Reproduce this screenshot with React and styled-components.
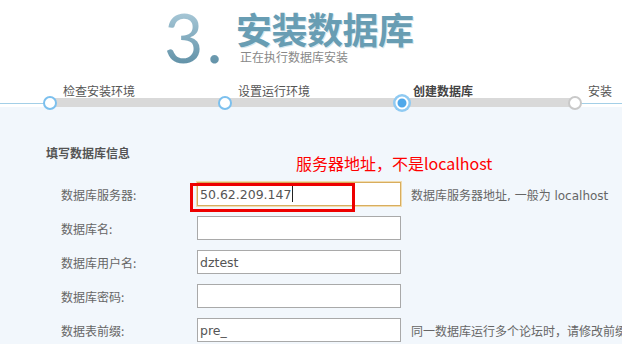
import React from 'react'
import styled, {createGlobalStyle} from 'styled-components'

const GlobalStyle = createGlobalStyle`
  html, body {
    margin: 0;
    padding: 0;
    background: #fff;
    overflow: hidden;
  }
  body {
    font-family: "DejaVu Sans", "Noto Sans CJK SC", sans-serif;
    font-size: 12px;
    color: #555;
  }
`

const steps = [
  {label: '检查安装环境', width: 175},
  {label: '设置运行环境', width: 177},
  {label: '创建数据库', width: 173, active: true},
  {label: '安装', last: true},
]

const rows = [
  {label: '数据库服务器:', value: '50.62.209.147', focus: true, help: '数据库服务器地址, 一般为 localhost'},
  {label: '数据库名:', value: ''},
  {label: '数据库用户名:', value: 'dztest'},
  {label: '数据库密码:', value: ''},
  {label: '数据表前缀:', value: 'pre_', help: '同一数据库运行多个论坛时，请修改前缀'},
]

export default function App(){
  return(
    <Page>
      <GlobalStyle/>
      <Header>
        <Number>3<Dot>.</Dot></Number>
        <TitleBlock>
          <Title>安装数据库</Title>
          <Subtitle>正在执行数据库安装</Subtitle>
        </TitleBlock>
      </Header>

      <Steps>
        {steps.map(s=>(
          <Segment key={s.label} $width={s.width}>
            <StepLabel $active={s.active}>{s.label}</StepLabel>
            <Bar $last={s.last}>
              <Dot2 $active={s.active} $last={s.last}/>
            </Bar>
          </Segment>
        ))}
      </Steps>

      <Panel>
        <SectionTitle>填写数据库信息</SectionTitle>
        <Form>
          {rows.map((r,i)=>(
            <Row key={r.label}>
              <Label>{r.label}</Label>
              <FieldWrap>
                <Field $focus={r.focus}>
                  {r.value}
                  {r.focus ? <Caret/> : null}
                </Field>
                {i === 0 ? (
                  <>
                    <Note>服务器地址，不是localhost</Note>
                    <Mark/>
                  </>
                ) : null}
              </FieldWrap>
              {r.help ? <Help>{r.help}</Help> : null}
            </Row>
          ))}
        </Form>
      </Panel>
    </Page>
  )
}

const Page = styled.div`
  width: 622px;
  height: 344px;
  display: flex;
  flex-direction: column;
  overflow: hidden;
`

const Header = styled.div`
  display: flex;
  align-items: flex-start;
  height: 80px;
  padding-left: 164px;
`

const Number = styled.div`
  font-family: Lato, "Open Sans", "Liberation Sans", sans-serif;
  font-weight: 400;
  font-size: 68px;
  line-height: 74px;
  background: linear-gradient(180deg, #b8d4e1 0%, #8fb5c7 40%, #55889f 100%);
  -webkit-background-clip: text;
  background-clip: text;
  color: transparent;
  width: 72px;
  height: 74px;
`

const Dot = styled.span`
  margin-left: 3px;
`

const TitleBlock = styled.div`
  display: flex;
  flex-direction: column;
  margin-top: 10px;
`

const Title = styled.div`
  font-family: "Noto Sans CJK SC", sans-serif;
  font-weight: 700;
  font-size: 36px;
  line-height: 36px;
  color: #689db3;
  text-shadow: 1px 1px 0 #d7e6ec;
  letter-spacing: -0.5px;
`

const Subtitle = styled.div`
  font-family: "Noto Sans CJK SC", sans-serif;
  font-size: 12px;
  line-height: 14px;
  color: #888;
  margin-top: 4px;
  padding-left: 4px;
`

const Steps = styled.div`
  display: flex;
  padding-left: 50px;
  margin-top: 3px;
  background: linear-gradient(#a3cfe7, #a3cfe7) 0 calc(100% - 3px) / 100% 1px no-repeat;
`

const Segment = styled.div`
  display: flex;
  flex-direction: column;
  width: ${p => p.$width ? p.$width + 'px' : 'auto'};
  flex: ${p => p.$width ? 'none' : '1'};
`

const StepLabel = styled.div`
  font-family: "Noto Sans CJK SC", sans-serif;
  font-size: 12px;
  line-height: 15px;
  height: 15px;
  padding-left: ${p => p.$active ? '11px' : '13px'};
  color: ${p => p.$active ? '#444' : '#555'};
  font-weight: ${p => p.$active ? 700 : 400};
  white-space: nowrap;
`

const Bar = styled.div`
  position: relative;
  height: 9px;
  background: ${p => p.$last ? 'transparent' : '#d9d9d9'};
`

const Dot2 = styled.span`
  position: absolute;
  left: 0;
  top: 50%;
  transform: translate(-50%, -50%);
  box-sizing: border-box;
  border-radius: 50%;
  width: ${p => p.$active ? '13px' : '14px'};
  height: ${p => p.$active ? '13px' : '14px'};
  background: ${p => p.$active ? '#4fa8ea' : '#fff'};
  border: ${p => p.$active ? '2px solid #fff' : p.$last ? '2px solid #c9c9c9' : '2.5px solid #7cc0ee'};
  box-shadow: ${p => p.$active ? '0 0 0 2.5px #8fcaf2' : 'none'};
`

const Panel = styled.div`
  flex: 1;
  background: #f2f7fc;
  padding: 39px 0 0 46px;
  min-width: 0;
`

const SectionTitle = styled.div`
  font-family: "Noto Sans CJK SC", sans-serif;
  font-weight: 700;
  font-size: 12px;
  line-height: 14px;
  color: #555;
`

const Form = styled.div`
  display: flex;
  flex-direction: column;
  gap: 10px;
  margin-top: 22px;
`

const Row = styled.div`
  display: flex;
  align-items: center;
  height: 24px;
  white-space: nowrap;
`

const Label = styled.div`
  flex: none;
  width: 136px;
  padding-left: 15px;
  font-family: "Noto Sans CJK SC", sans-serif;
  font-size: 12px;
  color: #666;
`

const FieldWrap = styled.div`
  position: relative;
  flex: none;
`

const Field = styled.div`
  box-sizing: border-box;
  width: 204px;
  height: 24px;
  padding: 0 2px;
  display: flex;
  align-items: center;
  background: #fff;
  border: 1px solid ${p => p.$focus ? '#d8ad5e' : '#a9a9a9'};
  box-shadow: ${p => p.$focus ? '0 0 0 1px #f1dcaf' : 'none'};
  font-family: "DejaVu Sans", sans-serif;
  font-size: 12.5px;
  color: #555;
`

const Caret = styled.span`
  display: inline-block;
  width: 1px;
  height: 16px;
  margin-left: 1px;
  background: #222;
`

const Note = styled.div`
  position: absolute;
  left: 99px;
  top: -29px;
  font-family: "Noto Sans CJK SC", sans-serif;
  font-size: 16px;
  line-height: 20px;
  color: #f00;
  white-space: nowrap;
`

const Mark = styled.div`
  position: absolute;
  left: -7px;
  top: 1px;
  width: 165px;
  height: 29px;
  box-sizing: border-box;
  border: 3px solid #ee0000;
`

const Help = styled.div`
  flex: none;
  margin-left: 10px;
  font-family: "DejaVu Sans", "Noto Sans CJK SC", sans-serif;
  font-size: 12px;
  color: #666;
`
